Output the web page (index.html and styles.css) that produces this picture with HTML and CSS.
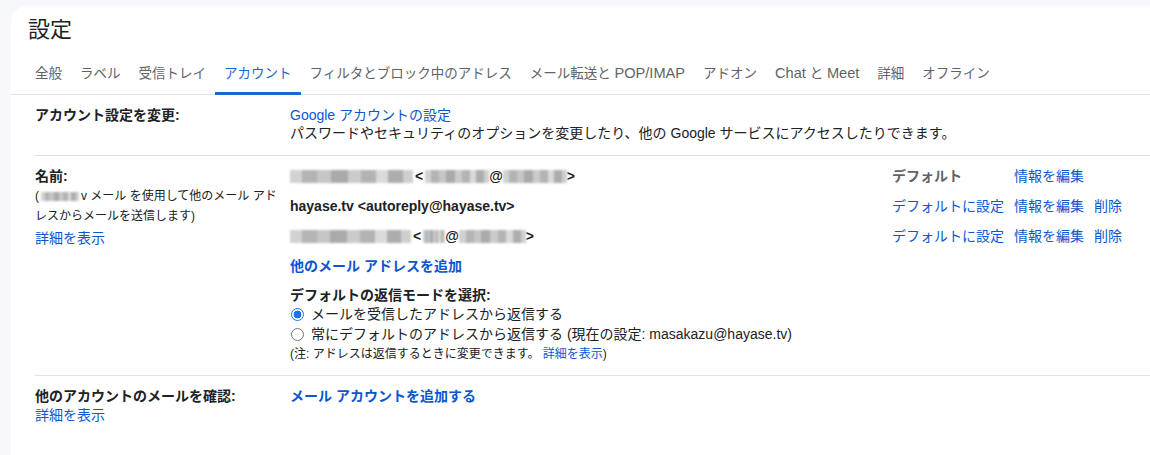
FILE: index.html
```html
<!DOCTYPE html>
<html lang="ja">
<head>
<meta charset="utf-8">
<title>設定</title>
<link rel="stylesheet" href="styles.css">
</head>
<body>
<div class="card">
  <h1 class="title">設定</h1>
  <div class="tabbar">
    <nav class="tabs">
      <span class="tab">全般</span>
      <span class="tab">ラベル</span>
      <span class="tab">受信トレイ</span>
      <span class="tab active">アカウント</span>
      <span class="tab">フィルタとブロック中のアドレス</span>
      <span class="tab">メール転送と <span class="lat">POP/IMAP</span></span>
      <span class="tab">アドオン</span>
      <span class="tab"><span class="lat">Chat</span> と <span class="lat">Meet</span></span>
      <span class="tab">詳細</span>
      <span class="tab">オフライン</span>
    </nav>
  </div>
  <div class="sections">
    <div class="row row-first">
      <div class="label"><b>アカウント設定を変更:</b></div>
      <div class="content">
        <a class="link">Google アカウントの設定</a>
        <div>パスワードやセキュリティのオプションを変更したり、他の Google サービスにアクセスしたりできます。</div>
      </div>
    </div>
    <div class="row row-name">
      <div class="label">
        <b>名前:</b>
        <div class="note"><span class="paren">(</span><span class="mosaic m-note"></span>v メール を使用して他のメール アドレスからメールを送信します)</div>
        <a class="link more">詳細を表示</a>
      </div>
      <div class="content">
        <div class="addresses">
          <div class="addr"><span class="mosaic m-a1"></span> &lt;<span class="mosaic m-a2"></span>@<span class="mosaic m-a3"></span>&gt;</div>
          <div class="muted">デフォルト</div>
          <a class="link">情報を編集</a>
          <span></span>

          <div class="addr">hayase.tv &lt;autoreply@hayase.tv&gt;</div>
          <a class="link">デフォルトに設定</a>
          <a class="link">情報を編集</a>
          <a class="link">削除</a>

          <div class="addr"><span class="mosaic m-b1"></span> &lt;<span class="mosaic m-b2"></span>@<span class="mosaic m-b3"></span>&gt;</div>
          <a class="link">デフォルトに設定</a>
          <a class="link">情報を編集</a>
          <a class="link">削除</a>
        </div>
        <a class="link strong add">他のメール アドレスを追加</a>
        <div class="reply-title"><b>デフォルトの返信モードを選択:</b></div>
        <div class="radio-line"><span class="radio checked"></span>メールを受信したアドレスから返信する</div>
        <div class="radio-line r2"><span class="radio"></span>常にデフォルトのアドレスから返信する (現在の設定: masakazu@hayase.tv)</div>
        <div class="small">(注: アドレスは返信するときに変更できます。 <a class="link">詳細を表示</a>)</div>
      </div>
    </div>
    <div class="row row-last">
      <div class="label">
        <b>他のアカウントのメールを確認:</b>
        <a class="link more2">詳細を表示</a>
      </div>
      <div class="content">
        <a class="link strong">メール アカウントを追加する</a>
      </div>
    </div>
  </div>
</div>
</body>
</html>
```

FILE: styles.css
```css
html, body {
  margin: 0;
  padding: 0;
}
body {
  background: #f6f8fc;
  font-family: "Liberation Sans", "Noto Sans CJK JP", sans-serif;
  font-size: 14px;
  line-height: 18px;
  color: #202124;
  overflow: hidden;
}
.card {
  margin: 6px 0 0 11px;
  background: #fff;
  border-radius: 16px 0 0 0;
  min-height: 460px;
  padding-top: 10px;
}
.title {
  margin: 0 0 0 17px;
  font-size: 22px;
  line-height: 28px;
  font-weight: 400;
  color: #1f1f1f;
}
.tabbar {
  border-bottom: 1px solid #e3e3e3;
  padding-left: 15px;
}
.tabs {
  display: flex;
  margin-bottom: -1px;
}
.tab {
  display: block;
  height: 20px;
  padding: 20px 9px 8px;
  line-height: 20px;
  font-size: 13.5px;
  color: #5f6368;
  border-bottom: 3px solid transparent;
  white-space: nowrap;
}
.tab .lat {
  font-size: 14.6px;
  line-height: 1;
}
.tab.active {
  color: #1a67d2;
  border-bottom-color: #1a67d2;
}
.sections {
  padding-left: 24px;
}
.row {
  display: grid;
  grid-template-columns: 255px 1fr;
  border-bottom: 1px solid #e3e3e3;
}
.row-first {
  padding: 11px 0 13px;
}
.row-name {
  padding: 11px 0 12px;
}
.row-last {
  border-bottom: none;
  padding: 11px 0 20px;
}
.label b {
  display: block;
}
b, .strong {
  font-weight: 700;
}
.link {
  color: #0b57d0;
  text-decoration: none;
  cursor: pointer;
}
.content > .link {
  display: block;
}
.note {
  font-size: 12px;
  line-height: 20px;
  margin-top: 1px;
  padding-right: 6px;
}
.paren {
  margin-right: 2px;
}
.more {
  display: block;
  margin-top: 3px;
}
.more2 {
  display: block;
  margin-top: 1px;
}
.addresses {
  display: grid;
  grid-template-columns: 1fr auto auto auto;
  column-gap: 10px;
  row-gap: 12px;
  padding-right: 28px;
}
.addr {
  font-weight: 700;
  white-space: nowrap;
  display: flex;
  align-items: center;
}
.muted {
  color: #5f6368;
  font-weight: 700;
}
.mosaic {
  display: inline-block;
  height: 13px;
  vertical-align: middle;
  background:
    linear-gradient(90deg,
      #d2d2d2 0 10%, #b4b4b4 10% 22%, #c6c6c6 22% 33%, #aaaaaa 33% 47%,
      #cbcbcb 47% 58%, #b3b3b3 58% 70%, #dadada 70% 80%, #adadad 80% 92%, #cfcfcf 92% 100%);
  filter: blur(1px);
}
.m-a1 { width: 123px; margin-right: 2px; }
.m-a2 { width: 64px; margin-left: 2px; }
.m-a3 { width: 64px; }
.m-b1 { width: 121px; margin-right: 2px; }
.m-b2 { width: 22px; margin-left: 2px; }
.m-b3 { width: 67px; }
.m-note { width: 38px; height: 9px; margin-right: 2px; vertical-align: -1px; }
.add {
  margin-top: 12px;
}
.reply-title {
  margin-top: 11px;
}
.radio-line {
  display: flex;
  align-items: center;
  gap: 7px;
  line-height: 20px;
}
.radio-line.r2 {
  line-height: 21px;
}
.radio {
  box-sizing: border-box;
  width: 13px;
  height: 13px;
  margin-left: 1px;
  border-radius: 50%;
  border: 1px solid #767676;
  background: #fff;
  flex: none;
}
.radio.checked {
  border: 1.5px solid #1a73e8;
  background: radial-gradient(circle, #1a73e8 0 3.6px, #fff 4.2px);
}
.small {
  font-size: 12px;
  line-height: 18px;
}
```
